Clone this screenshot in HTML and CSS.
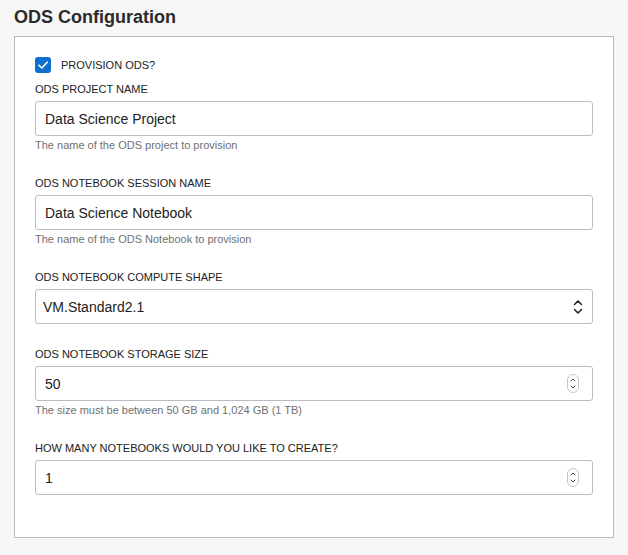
FILE: index.html
```html
<!DOCTYPE html>
<html lang="en">
<head>
<meta charset="utf-8">
<title>ODS Configuration</title>
<link rel="stylesheet" href="styles.css">
</head>
<body>
<h2 class="title">ODS Configuration</h2>
<div class="panel">
  <label class="check-row">
    <span class="checkbox">
      <svg width="16" height="16" viewBox="0 0 16 16"><path d="M4 8.2 L6.8 11 L12.2 5.2" fill="none" stroke="#fff" stroke-width="1.6" stroke-linecap="round" stroke-linejoin="round"/></svg>
    </span>
    <span class="check-label">PROVISION ODS?</span>
  </label>

  <div class="group">
    <div class="label">ODS PROJECT NAME</div>
    <div class="field"><input class="input" type="text" value="Data Science Project"></div>
    <div class="help">The name of the ODS project to provision</div>
  </div>

  <div class="group">
    <div class="label">ODS NOTEBOOK SESSION NAME</div>
    <div class="field"><input class="input" type="text" value="Data Science Notebook"></div>
    <div class="help">The name of the ODS Notebook to provision</div>
  </div>

  <div class="group group-tight">
    <div class="label">ODS NOTEBOOK COMPUTE SHAPE</div>
    <div class="field field-select">
      <span class="select-value">VM.Standard2.1</span>
      <svg class="select-arrows" width="10" height="16" viewBox="0 0 10 16"><path d="M1.5 5.5 L5 2 L8.5 5.5 M1.5 10.5 L5 14 L8.5 10.5" fill="none" stroke="#222" stroke-width="1.5" stroke-linecap="round" stroke-linejoin="round"/></svg>
    </div>
  </div>

  <div class="group">
    <div class="label">ODS NOTEBOOK STORAGE SIZE</div>
    <div class="field"><input class="input" type="text" value="50">
      <svg class="spinner" width="12" height="19" viewBox="0 0 12 19"><rect x="0.5" y="0.5" width="11" height="18" rx="5.5" fill="#fff" stroke="#c2c5ca"/><path d="M4 7 L6 5 L8 7 M4 12 L6 14 L8 12" fill="none" stroke="#444" stroke-width="1" stroke-linecap="round" stroke-linejoin="round"/></svg>
    </div>
    <div class="help">The size must be between 50 GB and 1,024 GB (1 TB)</div>
  </div>

  <div class="group">
    <div class="label">HOW MANY NOTEBOOKS WOULD YOU LIKE TO CREATE?</div>
    <div class="field"><input class="input" type="text" value="1">
      <svg class="spinner" width="12" height="19" viewBox="0 0 12 19"><rect x="0.5" y="0.5" width="11" height="18" rx="5.5" fill="#fff" stroke="#c2c5ca"/><path d="M4 7 L6 5 L8 7 M4 12 L6 14 L8 12" fill="none" stroke="#444" stroke-width="1" stroke-linecap="round" stroke-linejoin="round"/></svg>
    </div>
  </div>
</div>
</body>
</html>
```

FILE: styles.css
```css
html, body {
  margin: 0;
  padding: 0;
  background: #f7f7f7;
  font-family: "Liberation Sans", Arial, sans-serif;
  color: #222;
}

.title {
  margin: 0 14px 8px;
  padding-top: 6px;
  font-size: 18px;
  line-height: 22px;
  font-weight: bold;
  color: #2b2b2b;
}

.panel {
  margin: 0 14px;
  background: #fff;
  border: 1px solid #b7bbc1;
  padding: 20px 20px 18px;
}

.check-row {
  display: flex;
  align-items: center;
  gap: 10px;
  height: 16px;
  margin-bottom: 9px;
}

.checkbox {
  width: 16px;
  height: 16px;
  border-radius: 3px;
  background: #0f6fcf;
  display: flex;
}

.check-label {
  font-size: 11px;
  line-height: 14px;
  color: #222;
}

.group {
  margin-bottom: 24px;
}

.group-tight {
  margin-bottom: 23px;
}

.label {
  font-size: 11px;
  line-height: 14px;
  color: #222;
  margin-bottom: 5px;
}

.field {
  height: 35px;
  box-sizing: border-box;
  border: 1px solid #b9bdc3;
  border-radius: 3px;
  background: #fff;
  display: flex;
  align-items: center;
  padding: 0 13px 0 0;
}

.input {
  flex: 1;
  min-width: 0;
  border: 0;
  outline: none;
  background: transparent;
  font-family: "Liberation Sans", Arial, sans-serif;
  font-size: 14px;
  color: #222;
  padding: 0 0 0 9px;
  height: 100%;
}

.field-select {
  padding: 0 9px 0 7px;
  justify-content: space-between;
}

.select-value {
  font-size: 14px;
  color: #222;
}

.select-arrows {
  display: block;
}

.spinner {
  display: block;
}

.help {
  font-size: 11px;
  line-height: 14px;
  color: #707070;
  margin-top: 2px;
}
```
